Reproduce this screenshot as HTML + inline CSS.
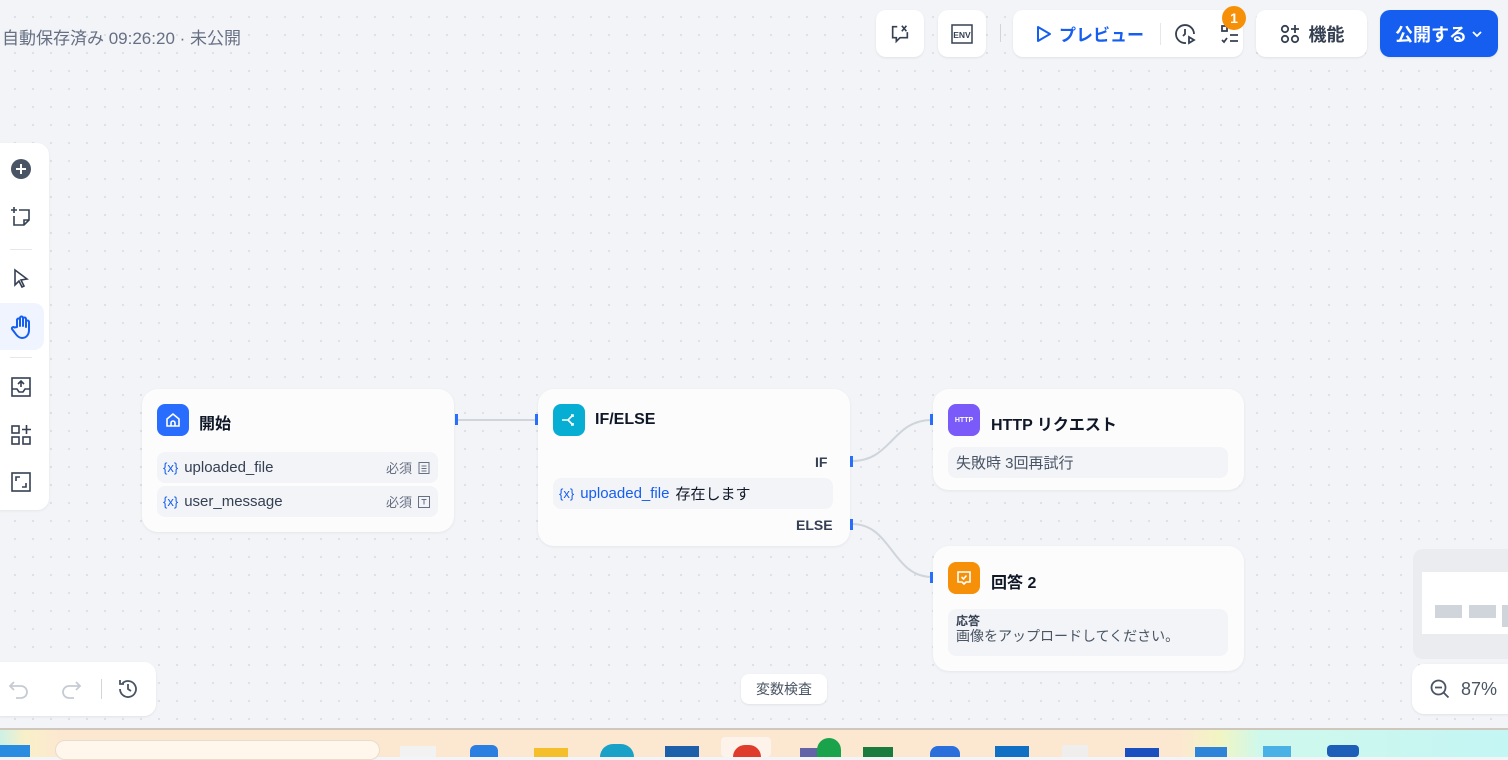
<!DOCTYPE html>
<html><head><meta charset="utf-8"><style>
*{box-sizing:border-box;margin:0;padding:0}
body{width:1508px;height:757px;overflow:hidden;position:relative;font-family:"Liberation Sans","Noto Sans CJK JP",sans-serif;background:#f2f4f7;background-image:radial-gradient(circle,#dcdfe5 1px,transparent 1.3px);background-size:18px 18px;background-position:6px 8px;color:#101828}
.a{position:absolute}
.card{position:absolute;background:#fcfcfd;border-radius:16px;box-shadow:0 1px 3px rgba(16,24,40,.06)}
.btn{position:absolute;background:#fff;border-radius:10px;box-shadow:0 1px 2px rgba(16,24,40,.08);display:flex;align-items:center;justify-content:center}
.ic{width:32px;height:32px;border-radius:8px;position:absolute;display:flex;align-items:center;justify-content:center;color:#fff}
.t{font-weight:bold;font-size:16px;position:absolute}
.row{position:absolute;background:#f2f4f7;border-radius:8px;font-size:15px;display:flex;align-items:center}
.v{color:#155eef;font-size:13px;margin-right:6px}
</style></head><body>
<div class="a" style="left:2px;top:24px;font-size:17px;color:#676f83">自動保存済み 09:26:20 · 未公開</div>

<div class="btn" style="left:876px;top:10px;width:48px;height:47px"><svg width="22" height="22" viewBox="0 0 24 24" fill="none" stroke="#354052" stroke-width="1.8"><path d="M9 4H4v12h4v4l4-4h8v-6"/><path d="M14 3l5 6M19 3l-5 6"/></svg></div>
<div class="btn" style="left:938px;top:10px;width:48px;height:47px"><svg width="24" height="22" viewBox="0 0 24 22"><rect x="2" y="2" width="20" height="18" fill="none" stroke="#354052" stroke-width="1.5"/><text x="12" y="15" font-size="8.5" font-weight="bold" text-anchor="middle" fill="#354052" font-family="Liberation Sans">ENV</text></svg></div>
<div class="a" style="left:1000px;top:24px;width:1px;height:18px;background:#d0d5dc"></div>
<div class="btn" style="left:1013px;top:10px;width:230px;height:47px;justify-content:flex-start">
 <svg style="margin-left:22px" width="18" height="20" viewBox="0 0 18 20"><path d="M3 3l12 7-12 7z" fill="none" stroke="#155eef" stroke-width="2" stroke-linejoin="round"/></svg>
 <span style="color:#155eef;font-weight:bold;font-size:17px;margin-left:6px">プレビュー</span>
 <div style="width:1px;height:22px;background:#e4e7ec;margin-left:16px"></div>
 <svg style="margin-left:12px" width="24" height="24" viewBox="0 0 24 24" fill="none" stroke="#354052" stroke-width="1.8"><path d="M13 21a9 9 0 1 1 8-9"/><path d="M12 7v5l-2 2"/><path d="M16 15l5 3-5 3z"/></svg>
 <svg style="margin-left:22px" width="22" height="22" viewBox="0 0 22 22" fill="none" stroke="#354052" stroke-width="1.8"><rect x="3" y="3" width="5" height="5"/><path d="M11 5h8M11 12h8M11 18h8M3 17l2 2 3-4"/></svg>
</div>
<div class="a" style="left:1222px;top:6px;width:24px;height:24px;border-radius:12px;background:#f79009;color:#fff;font-weight:bold;font-size:14px;text-align:center;line-height:24px">1</div>
<div class="btn" style="left:1256px;top:10px;width:111px;height:47px"><svg width="22" height="22" viewBox="0 0 22 22" fill="none" stroke="#354052" stroke-width="1.8"><circle cx="6" cy="6" r="3.2"/><circle cx="6" cy="16" r="3.2"/><circle cx="16" cy="16" r="3.2"/><path d="M16 2v8M12 6h8"/></svg><span style="font-size:18px;font-weight:bold;color:#354052;margin-left:8px">機能</span></div>
<div class="btn" style="left:1380px;top:10px;width:118px;height:47px;background:#155eef"><span style="color:#fff;font-weight:bold;font-size:18px">公開する</span><svg style="margin-left:4px" width="12" height="10" viewBox="0 0 12 10"><path d="M2 3l4 4 4-4" fill="none" stroke="#fff" stroke-width="1.8"/></svg></div>

<div class="card" style="left:-10px;top:143px;width:59px;height:367px;border-radius:12px;background:#fff"></div>
<svg class="a" style="left:10px;top:158px" width="22" height="22" viewBox="0 0 22 22"><circle cx="11" cy="11" r="10" fill="#495464"/><path d="M11 6v10M6 11h10" stroke="#fff" stroke-width="2"/></svg>
<svg class="a" style="left:10px;top:206px" width="22" height="22" viewBox="0 0 22 22" fill="none" stroke="#354052" stroke-width="1.6"><path d="M4 1v6M1 4h6M9 4h10v10l-5 5H4v-9M14 19v-5h5"/></svg>
<div class="a" style="left:10px;top:249px;width:22px;height:1px;background:#e4e7ec"></div>
<svg class="a" style="left:12px;top:268px" width="18" height="22" viewBox="0 0 18 22" fill="none" stroke="#354052" stroke-width="1.6"><path d="M3 2l12 9-6 1 3 6-2 1-3-6-4 4z"/></svg>
<div class="a" style="left:0;top:303px;width:44px;height:47px;background:#eff4ff;border-radius:0 10px 10px 0"></div>
<svg class="a" style="left:10px;top:314px" width="24" height="26" viewBox="0 0 24 26" fill="none" stroke="#155eef" stroke-width="2" stroke-linejoin="round"><path d="M7 13V6a1.5 1.5 0 0 1 3 0v6V4a1.5 1.5 0 0 1 3 0v8V5a1.5 1.5 0 0 1 3 0v8-5a1.5 1.5 0 0 1 3 0v8c0 5-3 8-7 8-3 0-5-2-7-5l-3-4a1.5 1.5 0 0 1 2.5-1.5z"/></svg>
<div class="a" style="left:10px;top:357px;width:22px;height:1px;background:#e4e7ec"></div>
<svg class="a" style="left:10px;top:376px" width="22" height="22" viewBox="0 0 22 22" fill="none" stroke="#354052" stroke-width="1.6"><rect x="2" y="2" width="18" height="18"/><path d="M2 13h5l2 3h4l2-3h5M11 11V5M8 8l3-3 3 3"/></svg>
<svg class="a" style="left:10px;top:424px" width="22" height="22" viewBox="0 0 22 22" fill="none" stroke="#354052" stroke-width="1.6"><rect x="2" y="2" width="7" height="7"/><rect x="2" y="13" width="7" height="7"/><rect x="13" y="13" width="7" height="7"/><path d="M16.5 1v9M12 5.5h9"/></svg>
<svg class="a" style="left:10px;top:471px" width="22" height="22" viewBox="0 0 22 22" fill="none" stroke="#354052" stroke-width="1.6"><rect x="2" y="2" width="18" height="18"/><path d="M6 10V6h4M16 12v4h-4"/></svg>

<svg class="a" style="left:0;top:0" width="1508" height="757"><g fill="none" stroke="#d0d5dc" stroke-width="2"><path d="M457 420H537"/><path d="M852 461C892 461 892 420 932 420"/><path d="M852 524C892 524 892 577 932 577"/></g>
<g fill="#2970ff"><rect x="455" y="414" width="3" height="11"/><rect x="535" y="414" width="3" height="11"/><rect x="850" y="456" width="3" height="11"/><rect x="850" y="519" width="3" height="11"/><rect x="930" y="414" width="3" height="11"/><rect x="930" y="572" width="3" height="11"/></g></svg>

<div class="card" style="left:142px;top:389px;width:312px;height:143px"></div>
<div class="ic" style="left:157px;top:404px;background:#296dff"><svg width="16" height="16" viewBox="0 0 16 16" fill="none" stroke="#fff" stroke-width="1.6"><path d="M2 7l6-5 6 5v7H2z"/><path d="M6 14v-3a2 2 0 0 1 4 0v3"/></svg></div>
<div class="t" style="left:199px;top:410px">開始</div>
<div class="row" style="left:157px;top:452px;width:281px;height:31px;padding-left:6px"><span class="v">{x}</span><span style="color:#354052">uploaded_file</span><span style="margin-left:auto;color:#676f83;font-size:13px">必須</span><svg style="margin:0 8px 0 6px" width="12" height="12" viewBox="0 0 12 12" fill="none" stroke="#676f83"><rect x="1" y="0.5" width="10" height="11"/><path d="M3.5 4h5M3.5 6.5h5M3.5 9h5"/></svg></div>
<div class="row" style="left:157px;top:486px;width:281px;height:31px;padding-left:6px"><span class="v">{x}</span><span style="color:#354052">user_message</span><span style="margin-left:auto;color:#676f83;font-size:13px">必須</span><svg style="margin:0 8px 0 6px" width="12" height="12" viewBox="0 0 12 12" fill="none" stroke="#676f83"><rect x="0.5" y="0.5" width="11" height="11"/><path d="M3.5 3.5h5M6 3.5v5"/></svg></div>

<div class="card" style="left:538px;top:389px;width:312px;height:157px"></div>
<div class="ic" style="left:553px;top:404px;background:#06aed4"><svg width="16" height="16" viewBox="0 0 16 16" fill="none" stroke="#fff" stroke-width="1.6"><path d="M1 8h6l5-5M7 8l5 5M10 3h2v2M10 13h2v-2"/></svg></div>
<div class="t" style="left:595px;top:411px">IF/ELSE</div>
<div class="a" style="left:815px;top:454px;font-size:14px;font-weight:bold;color:#354052">IF</div>
<div class="row" style="left:553px;top:478px;width:280px;height:31px;padding-left:6px"><span class="v">{x}</span><span style="color:#155eef;font-size:15px">uploaded_file</span><span style="margin-left:6px;font-size:15px">存在します</span></div>
<div class="a" style="left:796px;top:517px;font-size:14px;font-weight:bold;color:#354052">ELSE</div>

<div class="card" style="left:933px;top:389px;width:311px;height:101px"></div>
<div class="ic" style="left:948px;top:404px;background:#7a5af8;font-size:7px;font-weight:bold">HTTP</div>
<div class="t" style="left:991px;top:411px">HTTP リクエスト</div>
<div class="row" style="left:948px;top:447px;width:280px;height:31px;padding-left:8px;color:#495464;font-size:15px">失敗時 3回再試行</div>

<div class="card" style="left:933px;top:546px;width:311px;height:125px"></div>
<div class="ic" style="left:948px;top:562px;background:#f79009"><svg width="16" height="16" viewBox="0 0 16 16" fill="none" stroke="#fff" stroke-width="1.6"><path d="M2 2h12v10H10l-2 2-2-2H2z"/><path d="M5.5 7l2 2 3-3.5"/></svg></div>
<div class="t" style="left:991px;top:569px">回答 2</div>
<div class="a" style="left:948px;top:609px;width:280px;height:47px;background:#f2f4f7;border-radius:8px;padding:5px 8px"><div style="font-size:12px;font-weight:bold;color:#354052;line-height:14px">応答</div><div style="font-size:14px;color:#495464;line-height:17px">画像をアップロードしてください。</div></div>

<div class="a" style="left:1413px;top:549px;width:110px;height:110px;background:#eaecf0;border-radius:10px"></div>
<div class="a" style="left:1422px;top:572px;width:100px;height:62px;background:#fff"></div>
<div class="a" style="left:1435px;top:605px;width:27px;height:13px;background:#d0d5dc"></div>
<div class="a" style="left:1469px;top:605px;width:27px;height:13px;background:#d0d5dc"></div>
<div class="a" style="left:1502px;top:605px;width:8px;height:22px;background:#d0d5dc"></div>
<div class="btn" style="left:1412px;top:664px;width:110px;height:50px;border-radius:12px;justify-content:flex-start;padding-left:17px"><svg width="22" height="22" viewBox="0 0 22 22" fill="none" stroke="#495464" stroke-width="1.8"><circle cx="9.5" cy="9.5" r="7"/><path d="M6 9.5h7M14.5 14.5l5 5"/></svg><span style="margin-left:10px;font-size:18px;color:#495464">87%</span></div>

<div class="btn" style="left:-10px;top:662px;width:166px;height:54px;border-radius:12px"></div>
<svg class="a" style="left:8px;top:678px" width="22" height="22" viewBox="0 0 22 22" fill="none" stroke="#c6cbd3" stroke-width="1.8"><path d="M6 4L2 8l4 4M2 8h11a6 6 0 0 1 0 12H8"/></svg>
<svg class="a" style="left:60px;top:678px" width="22" height="22" viewBox="0 0 22 22" fill="none" stroke="#c6cbd3" stroke-width="1.8"><path d="M16 4l4 4-4 4M20 8H9a6 6 0 0 0 0 12h5"/></svg>
<div class="a" style="left:101px;top:679px;width:1px;height:20px;background:#d0d5dc"></div>
<svg class="a" style="left:117px;top:678px" width="22" height="22" viewBox="0 0 22 22" fill="none" stroke="#495464" stroke-width="1.8"><path d="M3 11a8 8 0 1 0 2.5-5.8M3 2v4h4M11 6v5l3 2"/></svg>
<div class="btn" style="left:741px;top:674px;width:86px;height:30px;border-radius:8px;font-size:14px;color:#495464">変数検査</div>

<div class="a" style="left:0;top:728px;width:1508px;height:29px;border-top:2px solid #cfc7bb;background:linear-gradient(90deg,#cdf1e6 0px,#f9f0c8 25px,#fce8d1 60px,#fce8d1 1180px,#f1f5c3 1220px,#cff8ec 1260px,#c4f6f4 1508px)"></div>
<div class="a" style="left:0;top:745px;width:30px;height:12px;background:#2a8ce0"></div>
<div class="a" style="left:55px;top:740px;width:325px;height:20px;border-radius:10px;background:#fff7ec;border:1px solid #e8dccb"></div>
<div class="a" style="left:400px;top:746px;width:36px;height:11px;background:#f2f2f2"></div>
<div class="a" style="left:470px;top:745px;width:28px;height:12px;background:#2a7fe0;border-radius:6px 6px 0 0"></div>
<div class="a" style="left:534px;top:748px;width:34px;height:9px;background:#f5bf2c"></div>
<div class="a" style="left:600px;top:744px;width:34px;height:13px;background:#1aa1c8;border-radius:14px 14px 0 0"></div>
<div class="a" style="left:665px;top:746px;width:34px;height:11px;background:#1d5fa8"></div>
<div class="a" style="left:721px;top:737px;width:50px;height:20px;background:#fdf3ea;border-radius:4px"></div>
<div class="a" style="left:733px;top:745px;width:28px;height:12px;background:#e03c2e;border-radius:14px 14px 0 0"></div>
<div class="a" style="left:800px;top:748px;width:30px;height:9px;background:#6264a7"></div>
<div class="a" style="left:817px;top:738px;width:24px;height:19px;background:#1aa34a;border-radius:12px 12px 0 0"></div>
<div class="a" style="left:863px;top:747px;width:30px;height:10px;background:#1b7a3e"></div>
<div class="a" style="left:930px;top:746px;width:30px;height:11px;background:#2a6fdb;border-radius:8px 8px 0 0"></div>
<div class="a" style="left:995px;top:746px;width:34px;height:11px;background:#1270c4"></div>
<div class="a" style="left:1062px;top:745px;width:26px;height:12px;background:#f0eded"></div>
<div class="a" style="left:1125px;top:748px;width:34px;height:9px;background:#1a4fc0"></div>
<div class="a" style="left:1195px;top:747px;width:32px;height:10px;background:#2d84d8"></div>
<div class="a" style="left:1263px;top:746px;width:28px;height:11px;background:#4ab1e6"></div>
<div class="a" style="left:1327px;top:745px;width:32px;height:12px;background:#1d5fb8;border-radius:4px"></div>
</body></html>
